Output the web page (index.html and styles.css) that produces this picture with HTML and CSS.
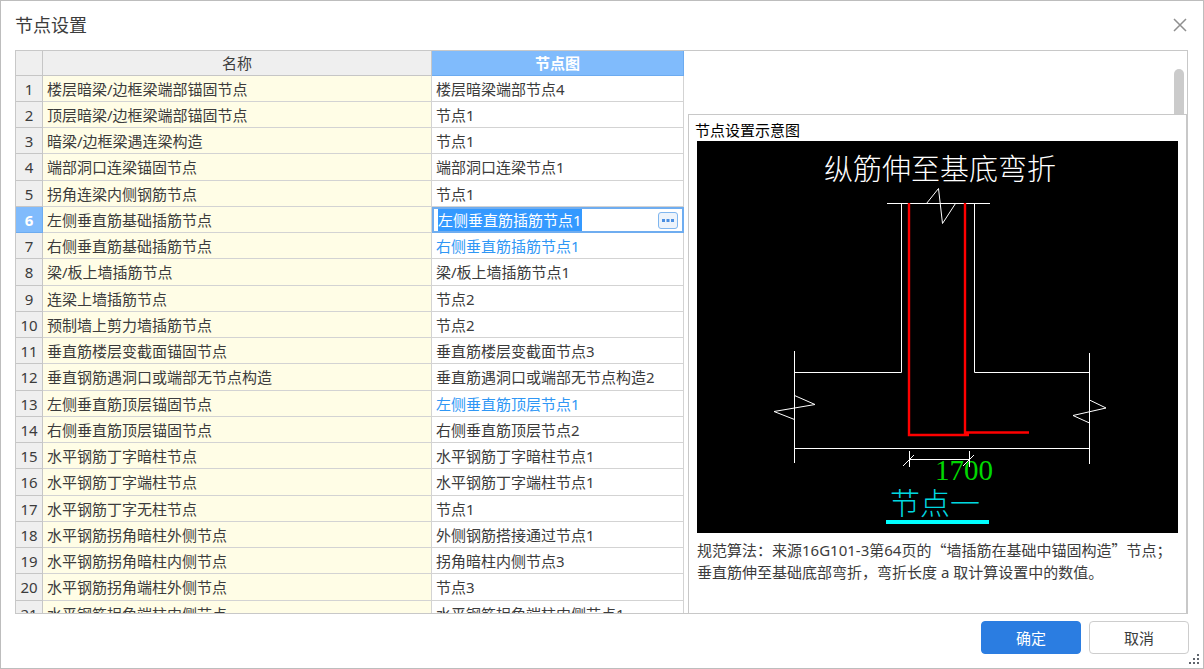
FILE: index.html
```html
<!DOCTYPE html>
<html lang="zh-CN">
<head>
<meta charset="utf-8">
<title>节点设置</title>
<link rel="stylesheet" href="styles.css">
</head>
<body>
<main class="dialog">
  <header class="titlebar">
    <h1 class="title">节点设置</h1>
    <button class="close" type="button" aria-label="关闭">
      <svg width="14" height="14" viewBox="0 0 14 14"><path d="M1 1L13 13M13 1L1 13" fill="none" stroke="#8f8f8f" stroke-width="1.5"/></svg>
    </button>
  </header>

  <section class="frame">
    <div class="grid-view">
      <table class="nodes">
        <colgroup><col class="col-no"><col><col class="col-node"></colgroup>
        <thead>
          <tr><th></th><th>名称</th><th class="active">节点图</th></tr>
        </thead>
        <tbody>
          <tr><th>1</th><td>楼层暗梁/边框梁端部锚固节点</td><td>楼层暗梁端部节点4</td></tr>
          <tr><th>2</th><td>顶层暗梁/边框梁端部锚固节点</td><td>节点1</td></tr>
          <tr><th>3</th><td>暗梁/边框梁遇连梁构造</td><td>节点1</td></tr>
          <tr><th>4</th><td>端部洞口连梁锚固节点</td><td>端部洞口连梁节点1</td></tr>
          <tr><th>5</th><td>拐角连梁内侧钢筋节点</td><td>节点1</td></tr>
          <tr><th class="active">6</th><td>左侧垂直筋基础插筋节点</td><td class="editing"><div class="editor"><input class="editor-input" type="text" value="左侧垂直筋插筋节点1" aria-label="节点图"><button class="more" type="button" aria-label="选择节点图"><svg width="12" height="3" viewBox="0 0 12 3"><path d="M0 0h3v3h-3zM4.500 0h3v3h-3zM9 0h3v3h-3z" fill="#4a8fe2"/></svg></button></div></td></tr>
          <tr><th>7</th><td>右侧垂直筋基础插筋节点</td><td class="changed">右侧垂直筋插筋节点1</td></tr>
          <tr><th>8</th><td>梁/板上墙插筋节点</td><td>梁/板上墙插筋节点1</td></tr>
          <tr><th>9</th><td>连梁上墙插筋节点</td><td>节点2</td></tr>
          <tr><th>10</th><td>预制墙上剪力墙插筋节点</td><td>节点2</td></tr>
          <tr><th>11</th><td>垂直筋楼层变截面锚固节点</td><td>垂直筋楼层变截面节点3</td></tr>
          <tr><th>12</th><td>垂直钢筋遇洞口或端部无节点构造</td><td>垂直筋遇洞口或端部无节点构造2</td></tr>
          <tr><th>13</th><td>左侧垂直筋顶层锚固节点</td><td class="changed">左侧垂直筋顶层节点1</td></tr>
          <tr><th>14</th><td>右侧垂直筋顶层锚固节点</td><td>右侧垂直筋顶层节点2</td></tr>
          <tr><th>15</th><td>水平钢筋丁字暗柱节点</td><td>水平钢筋丁字暗柱节点1</td></tr>
          <tr><th>16</th><td>水平钢筋丁字端柱节点</td><td>水平钢筋丁字端柱节点1</td></tr>
          <tr><th>17</th><td>水平钢筋丁字无柱节点</td><td>节点1</td></tr>
          <tr><th>18</th><td>水平钢筋拐角暗柱外侧节点</td><td>外侧钢筋搭接通过节点1</td></tr>
          <tr><th>19</th><td>水平钢筋拐角暗柱内侧节点</td><td>拐角暗柱内侧节点3</td></tr>
          <tr><th>20</th><td>水平钢筋拐角端柱外侧节点</td><td>节点3</td></tr>
          <tr><th>21</th><td>水平钢筋拐角端柱内侧节点</td><td>水平钢筋拐角端柱内侧节点1</td></tr>
        </tbody>
      </table>
    </div>

    <div class="side">
      <div class="scroll-track"><div class="scroll-thumb"></div></div>
      <aside class="preview">
        <h2 class="preview-title">节点设置示意图</h2>
        <svg class="drawing" viewBox="0 0 481 392" role="img" aria-label="纵筋伸至基底弯折">
          <rect width="481" height="392" fill="#000"/>
          <text class="cad-title" x="127" y="39">纵筋伸至基底弯折</text>
          <g fill="none" stroke="#fff" stroke-width="1">
            <path d="M190 62.500H293M204.500 62.500V231.500H97.500M277.500 62.500V231.500H392.500M97.500 210V322M392.500 212V323M97.500 307.500H392.500"/>
            <path d="M229.500 62.500L241.500 47.500L245.500 82.500L258.500 62.500"/>
            <path d="M97.500 254.500L118 263.500L77 270.500L97.500 278.500M392.500 259L409 267L376 274.500L392.500 282"/>
          </g>
          <path d="M212 62V294H272M268 62V291.500H332" fill="none" stroke="#f00" stroke-width="2.400"/>
          <text class="cad-dim" x="238" y="339">1700</text>
          <path d="M212.500 310V326M272.500 310V326M212.500 318.500H272.500M206 325L217 314M266 325L277 314" fill="none" stroke="#fff"/>
          <text class="cad-label" x="193" y="373">节点一</text>
          <rect x="189" y="379" width="103" height="4" fill="#0ff"/>
        </svg>
        <p class="note">规范算法：来源16G101-3第64页的<span class="cjk">“</span>墙插筋在基础中锚固构造<span class="cjk">”</span>节点；<br>垂直筋伸至基础底部弯折，弯折长度 a 取计算设置中的数值。</p>
      </aside>
    </div>
  </section>

  <footer class="footer">
    <button class="btn primary" type="button">确定</button>
    <button class="btn" type="button">取消</button>
  </footer>
  <svg class="grip" width="11" height="11" viewBox="0 0 11 11"><path d="M8 0h2v2h-2zM4 4h2v2h-2zM8 4h2v2h-2zM0 8h2v2h-2zM4 8h2v2h-2zM8 8h2v2h-2z" fill="#5f656d"/></svg>
</main>
<script src="editor.js"></script>
</body>
</html>
```
FILE: styles.css
```css
* { box-sizing: border-box; }

body {
  margin: 0;
  font: 15px/22px "Noto Sans", "Noto Sans CJK SC", sans-serif;
  color: #3c3c3c;
  background: #fff;
}

button, input { font: inherit; }

.dialog {
  position: relative;
  display: flex;
  flex-direction: column;
  height: 100vh;
  border: 1px solid #bdbdbd;
  overflow: hidden;
}

.titlebar {
  display: flex;
  align-items: center;
  justify-content: space-between;
  height: 49px;
  flex: none;
  padding: 0 16px 2px 14px;
}

.title {
  margin: 0;
  font-size: 18px;
  font-weight: 400;
}

.close {
  display: flex;
  padding: 0;
  border: 0;
  background: none;
}

.frame {
  flex: 1;
  min-height: 0;
  display: grid;
  grid-template-columns: 668fr 499fr;
  grid-template-rows: 100%;
  column-gap: 4px;
  margin: 0 15px 0 14px;
  border: 1px solid #c8c8c8;
}

.grid-view { overflow: hidden; }

.nodes {
  width: 100%;
  table-layout: fixed;
  border-collapse: separate;
  border-spacing: 0;
}

.col-no { width: 27px; }
.col-node { width: 252px; }

.nodes th, .nodes td {
  height: 26px;
  padding: 0 4px;
  border: solid #d3d3d3;
  border-width: 0 1px 1px 0;
  white-space: nowrap;
  font-weight: 400;
}

.nodes thead th { height: 25px; }
.nodes tr:nth-child(4n) > * { height: 27px; }

.nodes th {
  padding: 0;
  background: #efefef;
  border-color: #c6c6c6;
  text-align: center;
}

.nodes td:nth-child(2) { background: #fffde6; }

.nodes th.active {
  background: #80bbfc;
  border-color: #6cabf0;
  color: #fff;
  font-weight: 700;
}

.nodes .changed { color: #2f97f5; }

.nodes .editing {
  padding: 0;
  border: 0;
}

.editor {
  display: flex;
  align-items: center;
  height: 26px;
  padding: 0 4px;
  border: 2px solid #6fadf0;
}

.editor-input {
  flex: 1;
  min-width: 0;
  height: 22px;
  padding: 0;
  border: 0;
  outline: 0;
  color: #3c3c3c;
  caret-color: transparent;
}

.editor-input::selection {
  background: rgba(51, 153, 255, 0.996);
  color: #fff;
}

.more {
  display: flex;
  align-items: center;
  justify-content: center;
  width: 20px;
  height: 17px;
  padding: 0;
  border: 1px solid #7fb6ef;
  border-radius: 3px;
  background: #ecf3fb;
}

.side {
  display: flex;
  flex-direction: column;
  min-height: 0;
}

.scroll-track {
  display: flex;
  justify-content: flex-end;
  flex: none;
  height: 63px;
  padding: 18px 3px 0 0;
}

.scroll-thumb {
  width: 10px;
  border-radius: 5px 5px 0 0;
  background: #cbcbcb;
}

.preview {
  flex: 1;
  min-height: 0;
  overflow: hidden;
  padding: 4px 8px 0;
  border: solid #c8c8c8;
  border-width: 1px 1px 0 1px;
}

.preview-title {
  margin: 0 0 0 -2px;
  font-size: 15px;
  line-height: 22px;
  font-weight: 400;
  color: #000;
}

.drawing {
  display: block;
  width: 100%;
}

.cad-title, .cad-label {
  font-family: "Noto Sans CJK SC", sans-serif;
  font-weight: 300;
  font-size: 29px;
  fill: #fff;
}

.cad-label {
  font-size: 30px;
  fill: #00d8e0;
}

.cad-dim {
  font-family: "Liberation Serif", serif;
  font-size: 29px;
  fill: #00d800;
}

.note {
  margin: 6px 0 0;
  white-space: nowrap;
}

.cjk { font-family: "Noto Sans CJK SC", sans-serif; }

.footer {
  display: flex;
  flex: none;
  justify-content: flex-end;
  gap: 8px;
  padding: 7px 14px 14px;
}

.btn {
  width: 100px;
  height: 33px;
  padding: 0;
  border: 1px solid #cdcdcd;
  border-radius: 4px;
  background: #fff;
  color: #3c3c3c;
}

.btn.primary {
  border-color: #2b7de1;
  background: #2b7de1;
  color: #fff;
}

.grip {
  position: absolute;
  right: 3px;
  bottom: 3px;
}
```
FILE: editor.js
```js
const editor = document.querySelector(".editor-input");
editor.focus();
editor.select();
```
